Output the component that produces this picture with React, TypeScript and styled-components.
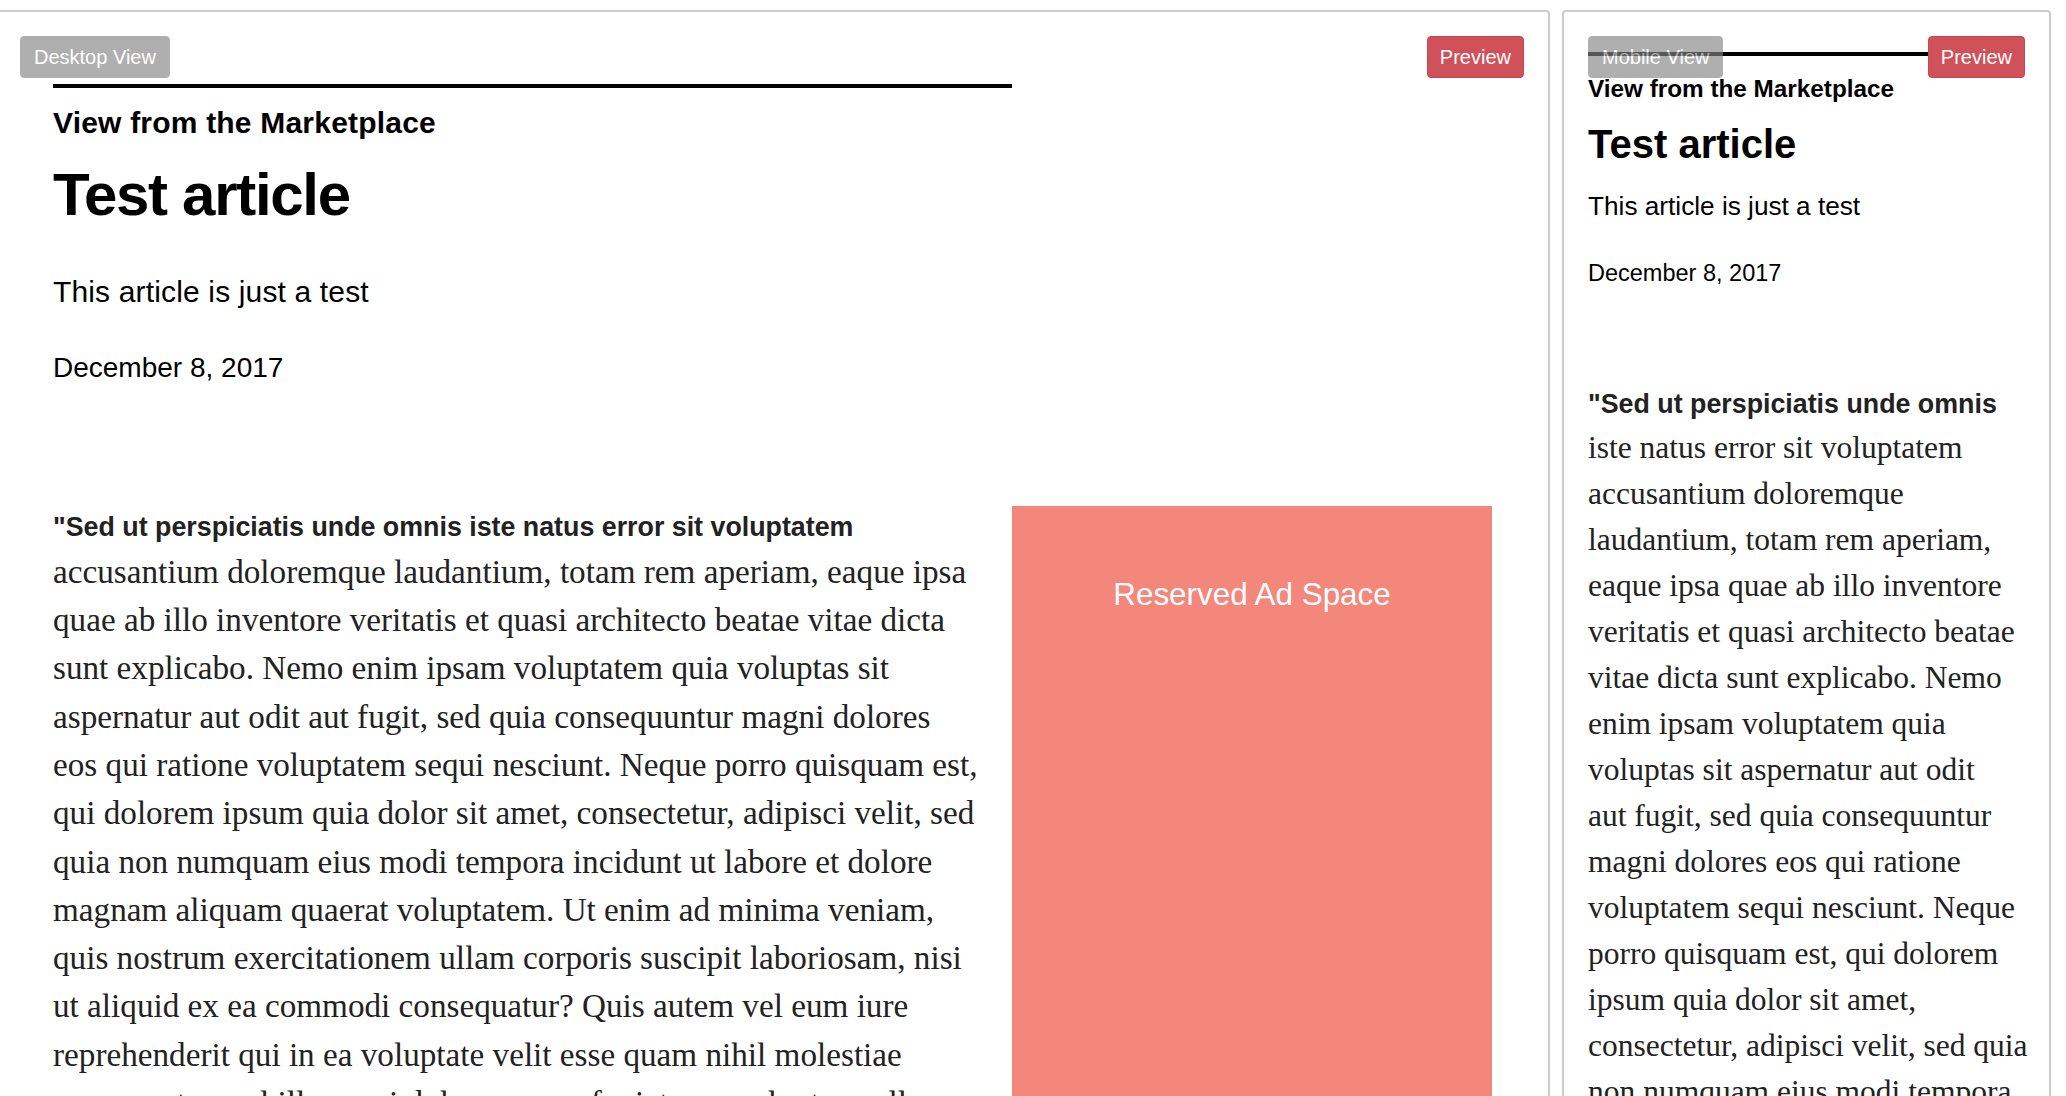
import React from "react";
import styled, { createGlobalStyle, css } from "styled-components";

const GlobalStyle = createGlobalStyle`
  html, body {
    margin: 0;
    padding: 0;
    background: #ffffff;
    overflow: hidden;
  }
  body {
    font-family: "Liberation Sans", Arial, sans-serif;
  }
`;

const SANS = `"Liberation Sans", Arial, Helvetica, sans-serif`;
const SERIF = `"Liberation Serif", "Times New Roman", serif`;

type Mode = { $mobile?: boolean };

const Page = styled.div`
  display: flex;
  align-items: flex-start;
  gap: 12px;
  padding: 10px 15px 0 0;
  height: 1096px;
  box-sizing: border-box;
  overflow: hidden;
`;

const Panel = styled.section<Mode>`
  position: relative;
  box-sizing: border-box;
  min-width: 0;
  min-height: 1400px;
  overflow: hidden;
  border: 2px solid #cccccc;
  border-radius: 4px;
  ${(p) =>
    p.$mobile
      ? css`
          flex: 1 1 0;
        `
      : css`
          flex: 0 0 1550px;
          border-left: 0;
          border-radius: 0 4px 4px 0;
        `}
`;

const Toolbar = styled.div<Mode>`
  position: absolute;
  top: 24px;
  left: ${(p) => (p.$mobile ? 24 : 20)}px;
  right: 24px;
  display: flex;
  justify-content: space-between;
  align-items: flex-start;
  z-index: 2;
`;

const ToolButton = styled.button<{ $variant: "view" | "preview" }>`
  font-family: ${SANS};
  font-size: 20px;
  line-height: 28px;
  padding: 6px 13px;
  border: 1px solid transparent;
  border-radius: 4px;
  color: #ffffff;
  cursor: pointer;
  ${(p) =>
    p.$variant === "view"
      ? css`
          background: #858585;
          border-color: #858585;
          opacity: 0.65;
          cursor: default;
        `
      : css`
          background: #d0515a;
          border-color: #c8474f;
          padding: 6px 12px;
        `}
`;

const Article = styled.article<Mode>`
  ${(p) =>
    p.$mobile
      ? css`
          padding: 40px 24px 0 24px;
        `
      : css`
          padding: 72px 0 0 53px;
        `}
`;

const Header = styled.header<Mode>`
  display: flex;
  flex-direction: column;
  width: ${(p) => (p.$mobile ? "100%" : "959px")};
`;

const Rule = styled.div`
  height: 4px;
  background: #000000;
`;

const Kicker = styled.h3<Mode>`
  margin: 0;
  font-family: ${SANS};
  font-weight: 700;
  color: #000;
  white-space: nowrap;
  ${(p) =>
    p.$mobile
      ? css`
          margin-top: 17.6px;
          font-size: 24.3px;
          line-height: 30px;
          letter-spacing: 0;
        `
      : css`
          margin-top: 17px;
          font-size: 30px;
          line-height: 36px;
          letter-spacing: 0.2px;
        `}
`;

const Title = styled.h1<Mode>`
  margin: 0;
  font-family: ${SANS};
  font-weight: 700;
  color: #000;
  white-space: nowrap;
  ${(p) =>
    p.$mobile
      ? css`
          margin-top: 16.5px;
          font-size: 40px;
          line-height: 48px;
        `
      : css`
          margin-top: 19px;
          font-size: 60px;
          line-height: 70px;
          letter-spacing: -1.3px;
        `}
`;

const Dek = styled.p<Mode>`
  margin: 0;
  font-family: ${SANS};
  font-weight: 400;
  color: #000;
  white-space: nowrap;
  ${(p) =>
    p.$mobile
      ? css`
          margin-top: 21.8px;
          font-size: 26.2px;
          line-height: 32px;
        `
      : css`
          margin-top: 44.4px;
          font-size: 30px;
          line-height: 36px;
          letter-spacing: 0.15px;
        `}
`;

const DateLine = styled.time<Mode>`
  display: block;
  margin: 0;
  font-family: ${SANS};
  color: #000;
  white-space: nowrap;
  ${(p) =>
    p.$mobile
      ? css`
          margin-top: 36px;
          font-size: 23.5px;
          line-height: 30px;
        `
      : css`
          margin-top: 40.7px;
          font-size: 28px;
          line-height: 34px;
        `}
`;

const BodyRow = styled.div<Mode>`
  display: grid;
  align-items: start;
  ${(p) =>
    p.$mobile
      ? css`
          grid-template-columns: 1fr;
          margin-top: 96.3px;
        `
      : css`
          grid-template-columns: 959px 480px;
          margin-top: 120.7px;
        `}
`;

const Paragraph = styled.p`
  margin: 0;
  color: #222222;
`;

const Line = styled.span<Mode & { $lead?: boolean }>`
  display: block;
  white-space: nowrap;
  ${(p) =>
    p.$lead
      ? css`
          font-family: ${SANS};
          font-weight: 700;
          font-size: 26.8px;
          line-height: ${p.$mobile ? 41 : 42}px;
          letter-spacing: 0;
        `
      : css`
          font-family: ${SERIF};
          font-weight: 400;
          font-size: ${p.$mobile ? 31.5 : 33.2}px;
          line-height: ${p.$mobile ? 46 : 48.3}px;
        `}
`;

const AdSpace = styled.aside`
  box-sizing: border-box;
  height: 900px;
  background: #f4877b;
  padding-top: 70px;
  text-align: center;
  font-family: ${SANS};
  font-size: 31.4px;
  line-height: 38px;
  color: #ffffff;
`;

const desktopLines = [
  '"Sed ut perspiciatis unde omnis iste natus error sit voluptatem',
  "accusantium doloremque laudantium, totam rem aperiam, eaque ipsa",
  "quae ab illo inventore veritatis et quasi architecto beatae vitae dicta",
  "sunt explicabo. Nemo enim ipsam voluptatem quia voluptas sit",
  "aspernatur aut odit aut fugit, sed quia consequuntur magni dolores",
  "eos qui ratione voluptatem sequi nesciunt. Neque porro quisquam est,",
  "qui dolorem ipsum quia dolor sit amet, consectetur, adipisci velit, sed",
  "quia non numquam eius modi tempora incidunt ut labore et dolore",
  "magnam aliquam quaerat voluptatem. Ut enim ad minima veniam,",
  "quis nostrum exercitationem ullam corporis suscipit laboriosam, nisi",
  "ut aliquid ex ea commodi consequatur? Quis autem vel eum iure",
  "reprehenderit qui in ea voluptate velit esse quam nihil molestiae",
  "consequatur, vel illum qui dolorem eum fugiat quo voluptas nulla",
  'pariatur?"',
];

const mobileLines = [
  '"Sed ut perspiciatis unde omnis',
  "iste natus error sit voluptatem",
  "accusantium doloremque",
  "laudantium, totam rem aperiam,",
  "eaque ipsa quae ab illo inventore",
  "veritatis et quasi architecto beatae",
  "vitae dicta sunt explicabo. Nemo",
  "enim ipsam voluptatem quia",
  "voluptas sit aspernatur aut odit",
  "aut fugit, sed quia consequuntur",
  "magni dolores eos qui ratione",
  "voluptatem sequi nesciunt. Neque",
  "porro quisquam est, qui dolorem",
  "ipsum quia dolor sit amet,",
  "consectetur, adipisci velit, sed quia",
  "non numquam eius modi tempora",
  "incidunt ut labore et dolore",
];

function ArticleView({ mobile }: { mobile?: boolean }) {
  const lines = mobile ? mobileLines : desktopLines;
  return (
    <Article $mobile={mobile}>
      <Header $mobile={mobile}>
        <Rule />
        <Kicker $mobile={mobile}>View from the Marketplace</Kicker>
        <Title $mobile={mobile}>Test article</Title>
        <Dek $mobile={mobile}>This article is just a test</Dek>
        <DateLine $mobile={mobile}>December 8, 2017</DateLine>
      </Header>
      <BodyRow $mobile={mobile}>
        <Paragraph>
          {lines.map((text, i) => (
            <Line key={i} $mobile={mobile} $lead={i === 0}>
              {text}
            </Line>
          ))}
        </Paragraph>
        {!mobile && <AdSpace>Reserved Ad Space</AdSpace>}
      </BodyRow>
    </Article>
  );
}

export default function App() {
  return (
    <>
      <GlobalStyle />
      <Page>
        <Panel>
          <Toolbar>
            <ToolButton $variant="view" disabled>
              Desktop View
            </ToolButton>
            <ToolButton $variant="preview">Preview</ToolButton>
          </Toolbar>
          <ArticleView />
        </Panel>
        <Panel $mobile>
          <Toolbar $mobile>
            <ToolButton $variant="view" disabled>
              Mobile View
            </ToolButton>
            <ToolButton $variant="preview">Preview</ToolButton>
          </Toolbar>
          <ArticleView mobile />
        </Panel>
      </Page>
    </>
  );
}
